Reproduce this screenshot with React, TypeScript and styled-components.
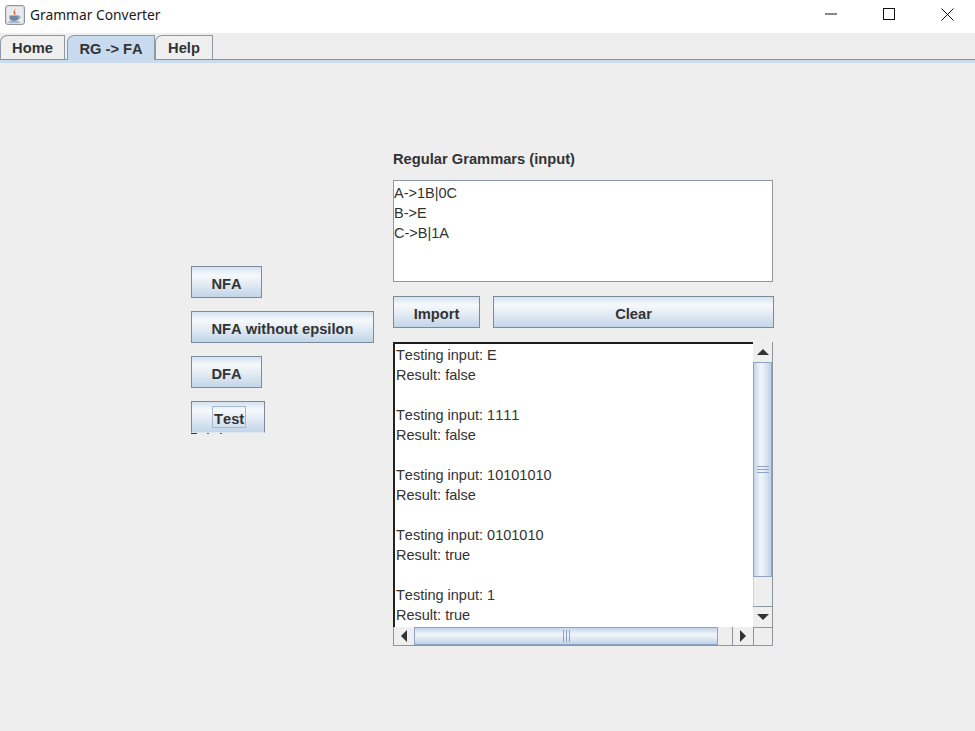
import React from "react";
import styled, { createGlobalStyle } from "styled-components";

const Global = createGlobalStyle`
  html, body { margin: 0; padding: 0; background: #eeeeee; }
  #root { width: 975px; height: 731px; overflow: hidden; }
`;

const Frame = styled.div`
  width: 975px;
  height: 731px;
  display: flex;
  flex-direction: column;
  background: #eeeeee;
  font-family: "Liberation Sans", Arial, sans-serif;
  color: #333333;
`;

const TitleBar = styled.header`
  height: 33px;
  flex: none;
  background: #ffffff;
  display: flex;
  align-items: center;
  padding-left: 5px;
`;

const AppIcon = styled.svg`
  width: 20px;
  height: 20px;
  flex: none;
  margin-top: -3px;
`;

const TitleText = styled.span`
  margin-left: 5px;
  margin-top: -4px;
  font-family: "Noto Sans", sans-serif;
  font-size: 13.8px;
  color: #1a1a1a;
`;

const WindowControls = styled.div`
  margin-left: auto;
  margin-right: -2px;
  display: flex;
  align-items: center;
  height: 100%;
  margin-top: -5px;
`;

const WindowButton = styled.div`
  width: 58.5px;
  height: 28px;
  display: flex;
  align-items: center;
  justify-content: center;
`;

const TabStrip = styled.nav`
  height: 26px;
  flex: none;
  display: flex;
  align-items: flex-end;
  background: #eeeeee;
  border-bottom: 1px solid #7c93b3;
  box-sizing: content-box;
`;

const Tab = styled.div<{ $w: number; $active?: boolean; $ml?: number }>`
  width: ${(p) => p.$w}px;
  margin-left: ${(p) => p.$ml ?? 0}px;
  height: ${(p) => (p.$active ? 25 : 24)}px;
  box-sizing: border-box;
  border: 1px solid #8b9aaa;
  border-bottom: none;
  border-top-left-radius: 7px;
  background: ${(p) => (p.$active ? "#c8daee" : "#efefef")};
  font-weight: 700;
  font-size: 14.7px;
  font-kerning: none;
  line-height: ${(p) => (p.$active ? 26 : 25)}px;
  text-align: center;
  color: #333333;
  margin-bottom: ${(p) => (p.$active ? -1 : 0)}px;
`;

const TabEdge = styled.div`
  height: 3px;
  flex: none;
  background: #cbdcef;
`;

const Content = styled.main`
  flex: 1;
  display: flex;
  padding-left: 191px;
`;

const ActionColumn = styled.div`
  width: 202px;
  flex: none;
  display: flex;
  flex-direction: column;
  align-items: flex-start;
  gap: 13px;
  padding-top: 203px;
`;

const SwingButton = styled.button<{ $w: number; $plainEdge?: boolean }>`
  position: relative;
  width: ${(p) => p.$w}px;
  height: 32px;
  padding: 4px 0 0;
  box-sizing: border-box;
  border: 1px solid #7d8a99;
  border-bottom-color: ${(p) => (p.$plainEdge ? "#dfe6ee" : "#7d8a99")};
  background: linear-gradient(180deg, #d5e2f1 0%, #f6f9fc 27%, #e6edf5 52%, #c2d5e9 100%);
  font-family: "Liberation Sans", Arial, sans-serif;
  font-weight: 700;
  font-size: 14.7px;
  font-kerning: none;
  color: #333333;
  display: flex;
  align-items: center;
  justify-content: center;

  ${(p) =>
    p.$plainEdge &&
    `&::after {
      content: "";
      position: absolute;
      left: -1px;
      bottom: -2px;
      width: 31px;
      height: 1px;
      background: linear-gradient(90deg, #333 0 6px, transparent 6px 16px, #666 16px 18px, transparent 18px 29px, #555 29px 31px);
    }`}
`;

const FocusMark = styled.span`
  display: block;
  border: 1px solid #a6b9cf;
  padding: 4px 0 0 1px;
  margin: -4px 0 0 2px;
  height: 22px;
  line-height: 16px;
  width: 34px;
  box-sizing: border-box;
  text-align: left;
`;

const EditorColumn = styled.section`
  width: 381px;
  flex: none;
  padding-top: 87px;
  display: flex;
  flex-direction: column;
`;

const FieldLabel = styled.label`
  font-weight: 700;
  font-size: 14.7px;
  font-kerning: none;
  line-height: 18px;
  color: #333333;
`;

const GrammarInput = styled.pre`
  width: 380px;
  height: 102px;
  margin: 12px 0 14px;
  box-sizing: border-box;
  background: #ffffff;
  border: 1px solid #8d97a1;
  padding: 2px 0 0 0;
  font-family: "Liberation Sans", Arial, sans-serif;
  font-size: 14.5px;
  font-kerning: none;
  line-height: 20px;
  color: #333333;
`;

const ButtonRow = styled.div`
  display: flex;
  gap: 13px;
  margin-bottom: 14px;
`;

const ScrollPane = styled.div`
  width: 380px;
  height: 304px;
  display: grid;
  grid-template-columns: 360px 20px;
  grid-template-rows: 285px 19px;
  box-sizing: border-box;
`;

const OutputText = styled.pre`
  margin: 0;
  overflow: hidden;
  box-sizing: border-box;
  background: #ffffff;
  border-top: 2px solid #1d1d1d;
  border-left: 2px solid #222222;
  padding: 1px 0 0 1px;
  font-family: "Liberation Sans", Arial, sans-serif;
  font-size: 14.5px;
  font-kerning: none;
  line-height: 20px;
  color: #333333;
`;

const VerticalBar = styled.div`
  display: flex;
  flex-direction: column;
  border-right: 1px solid #8d97a1;
  background: #eeeeee;
`;

const HorizontalBar = styled.div`
  display: flex;
  border-bottom: 1px solid #8d97a1;
  border-left: 1px solid #8d97a1;
  background: #eeeeee;
`;

const ArrowCell = styled.div<{ $vertical?: boolean }>`
  flex: none;
  width: ${(p) => (p.$vertical ? "auto" : "20px")};
  height: ${(p) => (p.$vertical ? "20px" : "auto")};
  display: flex;
  align-items: center;
  justify-content: center;
  background: #efefef;
  box-sizing: border-box;
`;

const VThumb = styled.div`
  height: 215px;
  flex: none;
  box-sizing: border-box;
  border: 1px solid #8fa3c4;
  background: linear-gradient(90deg, #c3d5ea 0%, #f2f6fb 40%, #e3ecf6 60%, #bfd2e8 100%);
  display: flex;
  align-items: center;
  justify-content: center;
`;

const HThumb = styled.div`
  width: 304px;
  flex: none;
  box-sizing: border-box;
  border: 1px solid #8fa3c4;
  background: linear-gradient(180deg, #c3d5ea 0%, #f2f6fb 40%, #e3ecf6 60%, #bfd2e8 100%);
  display: flex;
  align-items: center;
  justify-content: center;
`;

const Track = styled.div<{ $size: number; $vertical?: boolean }>`
  flex: none;
  ${(p) => (p.$vertical ? `height: ${p.$size}px;` : `width: ${p.$size}px;`)}
  background: #eeeeee;
  box-sizing: border-box;
  ${(p) => (p.$vertical ? "border-bottom: 1px solid #8d97a1;" : "border-right: 1px solid #8d97a1;")}
  border-left: 1px solid ${(p) => (p.$vertical ? "#c5d5e8" : "transparent")};
`;

const Corner = styled.div`
  background: #eeeeee;
  border: 1px solid #8d97a1;
  box-sizing: border-box;
`;

const Tri = ({ dir }: { dir: "up" | "down" | "left" | "right" }) => {
  const pts = {
    up: "0,6 12,6 6,0",
    down: "0,0 12,0 6,6",
    left: "6,0 6,12 0,6",
    right: "0,0 0,12 6,6",
  }[dir];
  const horizontal = dir === "up" || dir === "down";
  return (
    <svg width={horizontal ? 12 : 6} height={horizontal ? 6 : 12}>
      <polygon points={pts} fill="#333333" />
    </svg>
  );
};

const Grip = ({ vertical }: { vertical?: boolean }) =>
  vertical ? (
    <svg width="12" height="7">
      <path d="M0 .5h12M0 3.5h12M0 6.5h12" stroke="#8fa3c4" />
    </svg>
  ) : (
    <svg width="7" height="12">
      <path d="M.5 0v12M3.5 0v12M6.5 0v12" stroke="#8fa3c4" />
    </svg>
  );

const JavaIcon = () => (
  <AppIcon viewBox="0 0 20 20">
    <rect x="0.5" y="0.5" width="19" height="19" rx="2.5" fill="#d9dce0" stroke="#8e959c" />
    <rect x="2" y="2" width="16" height="16" rx="1.5" fill="#e9ebee" />
    <path d="M4.500 10.500h9v2.500c0 2-1.700 3-4.500 3s-4.500-1-4.500-3z" fill="#6f87a8" />
    <path d="M13.500 11c2.300 0 2.300 2.800-.6 2.800" fill="none" stroke="#6f87a8" />
    <path d="M3.500 17h11" stroke="#6f87a8" />
    <path d="M10 3c1 2-2.400 2.800-1.200 5 .4.800.9 1.500.4 2.500 1.800-1.200 1.400-2.300.8-3.300-.8-1.400 1.200-2.200 0-4.200z" fill="#d8592b" />
  </AppIcon>
);

const output = `Testing input: E
Result: false

Testing input: 1111
Result: false

Testing input: 10101010
Result: false

Testing input: 0101010
Result: true

Testing input: 1
Result: true`;

export default function App() {
  return (
    <Frame>
      <Global />
      <TitleBar>
        <JavaIcon />
        <TitleText>Grammar Converter</TitleText>
        <WindowControls>
          <WindowButton>
            <svg width="12" height="2"><path d="M0 1h12" stroke="#111" /></svg>
          </WindowButton>
          <WindowButton>
            <svg width="12" height="12"><rect x=".5" y=".5" width="11" height="11" fill="none" stroke="#111" /></svg>
          </WindowButton>
          <WindowButton>
            <svg width="13" height="13"><path d="M.5.5l12 12M12.500.5l-12 12" stroke="#111" /></svg>
          </WindowButton>
        </WindowControls>
      </TitleBar>
      <TabStrip>
        <Tab $w={65}>Home</Tab>
        <Tab $w={88} $active $ml={2}>RG -&gt; FA</Tab>
        <Tab $w={58}>Help</Tab>
      </TabStrip>
      <TabEdge />
      <Content>
        <ActionColumn>
          <SwingButton $w={71}>NFA</SwingButton>
          <SwingButton $w={183}>NFA without epsilon</SwingButton>
          <SwingButton $w={71}>DFA</SwingButton>
          <SwingButton $w={74} $plainEdge>
            <FocusMark>Test</FocusMark>
          </SwingButton>
        </ActionColumn>
        <EditorColumn>
          <FieldLabel>Regular Grammars (input)</FieldLabel>
          <GrammarInput>{`A->1B|0C
B->E
C->B|1A`}</GrammarInput>
          <ButtonRow>
            <SwingButton $w={87}>Import</SwingButton>
            <SwingButton $w={281}>Clear</SwingButton>
          </ButtonRow>
          <ScrollPane>
            <OutputText>{output}</OutputText>
            <VerticalBar>
              <ArrowCell $vertical><Tri dir="up" /></ArrowCell>
              <VThumb><Grip vertical /></VThumb>
              <Track $size={30} $vertical />
              <ArrowCell $vertical><Tri dir="down" /></ArrowCell>
            </VerticalBar>
            <HorizontalBar>
              <ArrowCell><Tri dir="left" /></ArrowCell>
              <HThumb><Grip /></HThumb>
              <Track $size={15} />
              <ArrowCell><Tri dir="right" /></ArrowCell>
            </HorizontalBar>
            <Corner />
          </ScrollPane>
        </EditorColumn>
      </Content>
    </Frame>
  );
}
